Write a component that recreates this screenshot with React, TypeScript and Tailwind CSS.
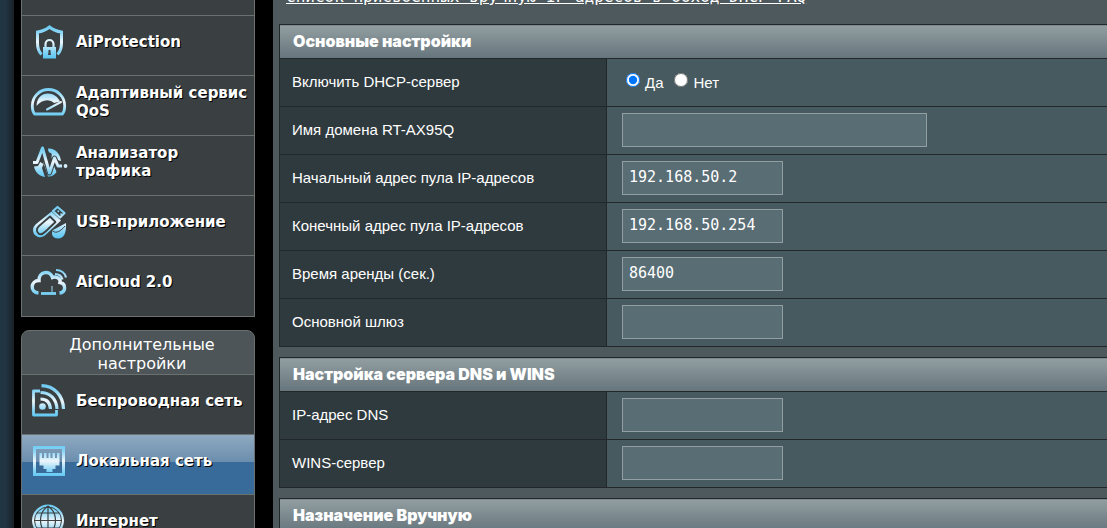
import type { ReactNode } from 'react';

interface MenuItem {
  label: string;
  icon: ReactNode;
  active?: boolean;
}

interface FieldProps {
  id: string;
  label: string;
  value?: string;
  wide?: boolean;
}

const G = 'url(#ice)';

function Icon({ children }: { children: ReactNode }) {
  return (
    <svg viewBox="0 0 40 40" className="w-10 h-10 shrink-0" fill="none" stroke={G} strokeWidth="3" aria-hidden="true">
      {children}
    </svg>
  );
}

const ShieldIcon = (
  <Icon>
    <path d="M13.500 32.500C10.500 29.500 9.500 26.500 9.500 21V10C14 9.500 18 8 21.500 5C25 8 29 9.500 33.500 10V21C33.500 26.500 32.500 29.500 29.500 32.500" />
    <path d="M17.500 26v-4a4 4 0 0 1 8 0v4" strokeWidth="2.200" />
    <path d="M15 25h13v11.500H15zM20.500 28v2l-.5 3h3l-.5-3v-2z" fill={G} fillRule="evenodd" stroke="none" />
  </Icon>
);

const GaugeIcon = (
  <Icon>
    <path d="M6.500 32C4.500 29.500 4.300 27 4.300 24C4.300 14.500 11.500 7.500 20.500 7.500S36.700 14.500 36.700 24C36.700 27 36.500 29.500 34.500 32Z" strokeWidth="2.800" strokeLinejoin="round" />
    <path d="M8.500 24C8.500 16 14 11.500 20 11.500C25 11.500 30 14.500 32 19.500L26 21C21 16 13 18 8.500 24Z" fill={G} stroke="none" />
    <path d="M19 27.500L33 20" strokeWidth="2" strokeLinecap="round" />
  </Icon>
);

const TrafficIcon = (
  <Icon>
    <path d="M6 24.500L10 24L12 20L15.500 22L14 26L17 35C11 34 7 30 6 24.500Z" fill={G} stroke="none" />
    <path d="M15 19L20 34.500C23 35 27 33 28.500 30L26 24L22 33Z" fill={G} stroke="none" />
    <path d="M20 6.500C27 6 32 11 33 19C29 18.500 28 15 25 17C22 16 25 13 23 11C21 11 20 9 20 6.500Z" fill={G} stroke="none" />
    <path d="M5 20.500h4L14.500 6L21.500 31L26.500 16L30 24H34" stroke="#3a4042" strokeWidth="5" strokeLinejoin="round" />
    <path d="M5 20.500h4L14.500 6L21.500 31L26.500 16L30 24H34" strokeLinejoin="round" />
    <circle cx="37.500" cy="24" r="1.900" fill="#d5effa" stroke="none" />
  </Icon>
);

const UsbIcon = (
  <Icon>
    <path d="M25 9L29.500 5L36.500 11L32 15.500Z" strokeWidth="2.200" strokeLinejoin="round" />
    <path d="M29.500 8.500l1.500 1.500M32.500 11.500l1.500 1.500" strokeWidth="1.500" />
    <path d="M23.500 9.500L7.500 22.500C4 26 4.500 31 7.500 33.500S14.500 36 18 32.500L33 18.500Z" fill={G} stroke="none" />
    <path d="M22 14.500L11 24C8 27 8.500 30 10.500 31.500S15 32 17.500 29.500L27.500 20Z" stroke="#3a4042" strokeWidth="1.800" strokeLinejoin="round" />
    <path d="M38 21L25 28C22 33 26 36.500 30 36.500C36 36.500 38.500 31 38 21Z" fill={G} stroke="none" />
    <path d="M25 29C28 32 33 29 37 24" stroke="#3a4042" strokeWidth="1" />
  </Icon>
);

const CloudIcon = (
  <Icon>
    <path d="M10.500 31C1.500 30.500 2.500 18.500 11 18.500C10.500 9.500 22 7.500 24.500 15.500C29 13.500 33 17.500 32 20.500C38.500 22 38 30.500 31.500 31" strokeWidth="3.400" />
    <path d="M13 31.500h15" strokeWidth="2.800" />
    <path d="M24 30v-6" strokeWidth="1" />
    <path d="M27 12C31 12 33.500 14 34.500 17.500M28 8C33 8 37 11 38 15.500" strokeWidth="2.200" />
  </Icon>
);

const WirelessIcon = (
  <Icon>
    <path d="M12 10H5.500V34H28.500V29" strokeWidth="2.800" strokeLinejoin="round" />
    <circle cx="14.500" cy="25.500" r="3.300" fill={G} stroke="none" />
    <path d="M12.500 18C18.500 18 22 21.500 22.500 28M12.500 11.500C22 11.500 28.500 17.500 29 28M13.500 4.700C26 5 35 14 35.500 28" strokeWidth="3.200" />
  </Icon>
);

const LanIcon = (
  <Icon>
    <path d="M6.500 6.500h29v27h-29z" />
    <path d="M11.500 12h2.500v5h2v-5h2.500v5h2v-5h2v5h2v-5h2.500v5h2v-5h2.500v12.500h-4v3.500h-3v3h-6v-3h-3v-3.500h-4z" fill={G} stroke="none" />
  </Icon>
);

const GlobeIcon = (
  <Icon>
    <circle cx="20" cy="19.500" r="15" fill={G} stroke={G} strokeWidth="2" />
    <circle cx="20" cy="19.500" r="13.500" stroke="#3a4042" strokeWidth="1" />
    <path d="M20 5v29M6 19.500h28M8.500 12h23M8.500 27h23M20 5C10 12 10 27 20 34M20 5C30 12 30 27 20 34" stroke="#3a4042" strokeWidth="1.200" />
  </Icon>
);

const generalMenu: MenuItem[] = [
  { label: 'AiProtection', icon: ShieldIcon },
  { label: 'Адаптивный сервис QoS', icon: GaugeIcon },
  { label: 'Анализатор трафика', icon: TrafficIcon },
  { label: 'USB-приложение', icon: UsbIcon },
  { label: 'AiCloud 2.0', icon: CloudIcon },
];

const advancedMenu: MenuItem[] = [
  { label: 'Беспроводная сеть', icon: WirelessIcon },
  { label: 'Локальная сеть', icon: LanIcon, active: true },
  { label: 'Интернет', icon: GlobeIcon },
];

function Menu({ items }: { items: MenuItem[] }) {
  return (
    <ul>
      {items.map((item) => (
        <li key={item.label} className="border-t border-[#6b7071]">
          <a
            href="#"
            className={`flex items-center h-[59px] pl-1.5 pb-2 gap-2 text-white text-[15px] leading-[18px] font-bold [text-shadow:1px_1px_0_#000] ${
              item.active
                ? 'bg-linear-to-b from-[#8fa9c0] via-[#6b8eae] via-46% to-[#386a9a] to-46%'
                : 'bg-[#3a4042]'
            }`}
          >
            {item.icon}
            <span>{item.label}</span>
          </a>
        </li>
      ))}
    </ul>
  );
}

function Section({ title, children }: { title: string; children?: ReactNode }) {
  return (
    <table className="w-full table-fixed border-collapse text-[15px] leading-5">
      <colgroup>
        <col className="w-[327px]" />
        <col />
      </colgroup>
      <thead>
        <tr>
          <th
            colSpan={2}
            className="h-[34px] px-[13px] pb-0.5 border border-[#222829] bg-linear-to-b from-[#929ea1] to-[#66757c] text-left text-base leading-5 font-black font-[Inter,sans-serif]"
          >
            {title}
          </th>
        </tr>
      </thead>
      <tbody>{children}</tbody>
    </table>
  );
}

function Row({ label, children }: { label: ReactNode; children: ReactNode }) {
  return (
    <tr>
      <th scope="row" className="h-12 px-3 pb-0.5 border border-[#222829] bg-[#2f3a3e] text-left font-normal">
        {label}
      </th>
      <td className="px-[15px] pb-0.5 border border-[#222829] bg-[#475a5f]">{children}</td>
    </tr>
  );
}

function Field({ id, label, value = '', wide }: FieldProps) {
  return (
    <Row label={<label htmlFor={id}>{label}</label>}>
      <input
        id={id}
        type="text"
        defaultValue={value}
        className={`block h-[34px] pl-1.5 pb-px border border-[#929ea1] bg-[#596d74] text-[15px] outline-none font-['DejaVu_Sans_Mono',monospace] ${
          wide ? 'w-[305px]' : 'w-[161px]'
        }`}
      />
    </Row>
  );
}

export default function App() {
  return (
    <div className="flex h-screen overflow-hidden bg-black text-white font-['Liberation_Sans',Arial,sans-serif]">
      {/* Shared icon gradient */}
      <svg className="absolute w-0 h-0" aria-hidden="true">
        <linearGradient id="ice" gradientUnits="userSpaceOnUse" x1="0" y1="4" x2="0" y2="36">
          <stop offset="0" stopColor="#6cc9f2" />
          <stop offset="0.2" stopColor="#8ad6f6" />
          <stop offset="0.5" stopColor="#eef6fb" />
          <stop offset="0.8" stopColor="#84d4f5" />
          <stop offset="1" stopColor="#5cc6f2" />
        </linearGradient>
      </svg>

      {/* Page edge */}
      <div className="w-3.5 shrink-0 bg-linear-to-r from-[#213442] from-40% to-[#192127]" />

      {/* Sidebar */}
      <nav className="w-[234px] shrink-0 ml-[7px] font-['DejaVu_Sans',Verdana,sans-serif]">
        <div className="border-x border-b border-[#6b7071] bg-[#3a4042] pt-[15px] pb-px">
          <Menu items={generalMenu} />
        </div>
        <div className="mt-[13px] border border-[#6b7071] rounded-t-lg bg-[#4d5558] overflow-hidden">
          <h2 className="h-[43px] pt-1 pl-9 pr-7 text-center text-base leading-[19px]">Дополнительные настройки</h2>
          <Menu items={advancedMenu} />
        </div>
      </nav>

      {/* Content */}
      <main className="flex-1 min-w-0 ml-[18px] pl-1.5 bg-[#4d595d]">
        <a
          href="#"
          className="block -mt-[13px] mb-[17px] pl-[7px] text-base leading-5 underline whitespace-nowrap font-['DejaVu_Sans_Mono',monospace]"
        >
          Список присвоенных вручную IP-адресов в обход DHCP FAQ
        </a>
        <div className="flex flex-col gap-2.5 -mr-px">
          <Section title="Основные настройки">
            <Row label="Включить DHCP-сервер">
              <div className="flex items-center pl-1 pt-0.5">
                <input id="dhcp-on" type="radio" name="dhcp" defaultChecked className="size-3.5 mr-[5px] mb-1.5" />
                <label htmlFor="dhcp-on">Да</label>
                <input id="dhcp-off" type="radio" name="dhcp" className="size-3.5 ml-2.5 mr-1.5 mb-1.5" />
                <label htmlFor="dhcp-off">Нет</label>
              </div>
            </Row>
            <Field id="domain" label="Имя домена RT-AX95Q" wide />
            <Field id="pool-start" label="Начальный адрес пула IP-адресов" value="192.168.50.2" />
            <Field id="pool-end" label="Конечный адрес пула IP-адресов" value="192.168.50.254" />
            <Field id="lease" label="Время аренды (сек.)" value="86400" />
            <Field id="gateway" label="Основной шлюз" />
          </Section>
          <Section title="Настройка сервера DNS и WINS">
            <Field id="dns" label="IP-адрес DNS" />
            <Field id="wins" label="WINS-сервер" />
          </Section>
          <Section title="Назначение Вручную" />
        </div>
      </main>
    </div>
  );
}
